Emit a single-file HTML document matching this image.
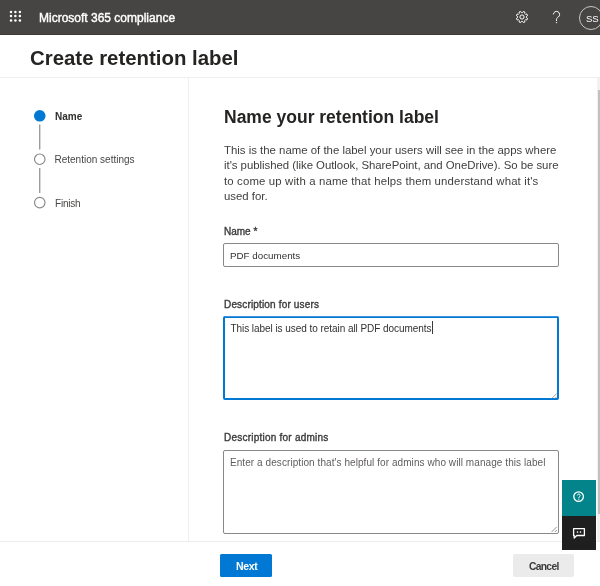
<!DOCTYPE html>
<html><head><meta charset="utf-8">
<style>
*{margin:0;padding:0;box-sizing:border-box}
body{will-change:transform}
html,body{width:600px;height:586px;overflow:hidden;background:#fff;font-family:"Liberation Sans",sans-serif;color:#323130}
.a{position:absolute;white-space:nowrap}
#hdr{position:absolute;left:0;top:0;width:600px;height:35px;background:#464544;border-bottom:1px solid #3d3c3b}
.dot{position:absolute;width:2px;height:2px;background:#fff}
#brand{left:39px;top:11px;font-size:12px;letter-spacing:0px;font-weight:normal;-webkit-text-stroke:0.4px #fff;color:#fff;line-height:14px}
#title{left:30px;top:47px;font-size:20.4px;font-weight:bold;color:#252423;line-height:22px}
#hline{position:absolute;left:0;top:77px;width:600px;height:1px;background:#efefef}
#vline{position:absolute;left:188px;top:78px;width:1px;height:463px;background:#efefef}
#fline{position:absolute;left:0;top:541px;width:600px;height:1px;background:#ececec}
.circ{position:absolute;width:12px;height:12px;border-radius:50%;border:1px solid #8a8886;background:#fff}
.conn{position:absolute;left:39px;width:1px;background:#8a8886}
.step{font-size:10px;line-height:12px;color:#323130}
#h2{left:224px;top:108px;font-size:17.5px;font-weight:bold;color:#252423;line-height:18px}
#para{position:absolute;left:224px;top:143px;width:360px;font-size:11.4px;line-height:15.4px;color:#3f3e3d}
.lbl{font-size:10px;font-weight:normal;-webkit-text-stroke:0.35px #3b3a39;line-height:12px;color:#3b3a39}
.box{position:absolute;left:223px;width:336px;border:1px solid #8a8886;border-radius:2px;background:#fff}
.txt{font-size:10px;line-height:12px}
#btnNext{position:absolute;left:220px;top:554px;width:52px;height:23px;background:#0078d4;border-radius:1.5px}
#btnCancel{position:absolute;left:513px;top:554px;width:61px;height:23px;background:#ebebeb;border-radius:2px}
#sbtrack{position:absolute;left:597px;top:78px;width:3px;height:463px;background:#f1f1f1}
#sbthumb{position:absolute;left:598px;top:90px;width:2px;height:424px;background:#c1c1c1}
#teal{position:absolute;left:562px;top:480px;width:34px;height:36px;background:#02848a}
#dark{position:absolute;left:562px;top:516px;width:34px;height:34px;background:#201f1f}
</style></head><body>
<div id="hdr">
  <svg class="a" style="left:0;top:0" width="30" height="30" viewBox="0 0 30 30" fill="#fff"><circle cx="11" cy="11.9" r="1.25"/><circle cx="15.4" cy="11.9" r="1.25"/><circle cx="19.9" cy="11.9" r="1.25"/><circle cx="11" cy="16.1" r="1.25"/><circle cx="15.4" cy="16.1" r="1.25"/><circle cx="19.9" cy="16.1" r="1.25"/><circle cx="11" cy="20.4" r="1.25"/><circle cx="15.4" cy="20.4" r="1.25"/><circle cx="19.9" cy="20.4" r="1.25"/></svg>
  <div class="a" id="brand">Microsoft 365 compliance</div>
  <svg class="a" style="left:514px;top:9px" width="16" height="16" viewBox="0 0 16 16"><path fill="none" stroke="#fff" stroke-width="1" stroke-linejoin="round" d="M12.50,8.00 L12.46,8.63 L13.54,9.33 L12.86,10.98 L11.60,10.70 L11.18,11.18 L10.70,11.60 L10.98,12.86 L9.33,13.54 L8.63,12.46 L8.00,12.50 L7.37,12.46 L6.67,13.54 L5.02,12.86 L5.30,11.60 L4.82,11.18 L4.40,10.70 L3.14,10.98 L2.46,9.33 L3.54,8.63 L3.50,8.00 L3.54,7.37 L2.46,6.67 L3.14,5.02 L4.40,5.30 L4.82,4.82 L5.30,4.40 L5.02,3.14 L6.67,2.46 L7.37,3.54 L8.00,3.50 L8.63,3.54 L9.33,2.46 L10.98,3.14 L10.70,4.40 L11.18,4.82 L11.60,5.30 L12.86,5.02 L13.54,6.67 L12.46,7.37Z"/><circle cx="8" cy="8" r="2.1" fill="none" stroke="#fff" stroke-width="1"/></svg>
  <svg class="a" style="left:550px;top:9px" width="12" height="16" viewBox="0 0 12 16"><path fill="none" stroke="#fff" stroke-width="1" d="M3.4,5.4 A3.1,3.1 0 1 1 8.3,8 C7.2,8.7 6.5,9.3 6.5,10.6 V12"/><circle cx="6.5" cy="13.6" r="0.7" fill="#fff"/></svg>
  <div class="a" style="left:579px;top:6px;width:24px;height:24px;border:1px solid #c8c6c4;border-radius:50%"></div>
  <div class="a" style="left:586px;top:13px;font-size:9.6px;line-height:12px;color:#fff;letter-spacing:-0.2px">SS</div>
</div>
<div class="a" id="title">Create retention label</div>
<div id="hline"></div>
<div id="vline"></div>
<div id="fline"></div>

<svg class="a" style="left:0;top:100px" width="60" height="120" viewBox="0 100 60 120"><circle cx="39.75" cy="115.8" r="5.8" fill="#0078d4"/><path stroke="#8a8886" stroke-width="1.15" d="M39.75,124.5 V149.6 M39.75,168 V193"/><circle cx="39.75" cy="159.2" r="5.25" fill="none" stroke="#8a8886" stroke-width="1.15"/><circle cx="39.75" cy="202.6" r="5.25" fill="none" stroke="#8a8886" stroke-width="1.15"/></svg>
<div class="a step" style="left:55px;top:111px;font-weight:bold">Name</div>
<div class="a step" style="left:54.5px;top:154px;color:#484644">Retention settings</div>
<div class="a step" style="left:55px;top:198px;color:#484644;letter-spacing:-0.2px">Finish</div>

<div class="a" id="h2">Name your retention label</div>
<div id="para">This is the name of the label your users will see in the apps where<br><span style="letter-spacing:-0.03px">it's published (like Outlook, SharePoint, and OneDrive). So be sure</span><br><span style="letter-spacing:0.14px">to come up with a name that helps them understand what it's</span><br>used for.</div>

<div class="a lbl" style="left:224px;top:226px">Name *</div>
<div class="box" style="top:243px;height:24px"></div>
<div class="a txt" style="left:230px;top:250px;font-size:9.8px">PDF documents</div>

<div class="a lbl" style="left:224px;top:299px;letter-spacing:0.16px">Description for users</div>
<div class="box" style="top:316px;height:84px;border:2px solid #0078d4"></div>
<div class="a" style="left:225px;top:316px;width:332px;height:1px;background:#3f95dc"></div>
<svg class="a" style="left:549px;top:390px" width="10" height="10" viewBox="0 0 10 10"><path stroke="#a19f9d" stroke-width="0.9" d="M2.6,8.6 L7.8,3.4 M5.8,8.6 L7.8,6.6"/></svg>
<div class="a" style="left:432px;top:321px;width:1px;height:13px;background:#3b3a39"></div>
<div class="a txt" style="left:230.4px;top:323px;letter-spacing:-0.05px">This label is used to retain all PDF documents</div>

<div class="a lbl" style="left:224px;top:432px;letter-spacing:0.23px">Description for admins</div>
<div class="box" style="top:450px;height:84px"></div>
<svg class="a" style="left:549px;top:523px" width="10" height="10" viewBox="0 0 10 10"><path stroke="#8a8886" stroke-width="0.9" d="M2.6,9 L7.8,3.8 M5.8,9 L7.8,7"/></svg>
<div class="a txt" style="left:230px;top:457px;color:#605e5c;letter-spacing:0.07px">Enter a description that's helpful for admins who will manage this label</div>

<div id="btnNext"></div>
<div class="a" style="left:236px;top:560px;font-size:10.5px;font-weight:bold;color:#fff;line-height:12px;letter-spacing:-0.3px">Next</div>
<div id="btnCancel"></div>
<div class="a" style="left:529px;top:561px;font-size:10.3px;font-weight:bold;color:#3b3a39;line-height:12px;letter-spacing:-0.7px">Cancel</div>

<div id="sbtrack"></div>
<div id="sbthumb"></div>
<div id="teal"><svg style="position:absolute;left:8px;top:8px" width="18" height="18" viewBox="0 0 18 18"><circle cx="8.6" cy="8.6" r="4.8" fill="none" stroke="#fff" stroke-width="1.3"/><path fill="none" stroke="#fff" stroke-width="1" d="M7.3,7.4 A1.4,1.4 0 1 1 9.6,8.5 C9.1,8.9 8.8,9.2 8.8,9.9 V10.4"/><circle cx="8.8" cy="11.6" r="0.55" fill="#fff"/></svg></div>
<div id="dark"><svg style="position:absolute;left:8px;top:8px" width="18" height="18" viewBox="0 0 18 18"><path fill="none" stroke="#fff" stroke-width="1.3" stroke-linejoin="round" d="M3.6,4.6 H14.4 V11.5 H6.8 L4.2,14 V11.5 H3.6 Z"/><circle cx="7.5" cy="8.1" r="0.8" fill="#fff"/><circle cx="10.5" cy="8.1" r="0.8" fill="#fff"/></svg></div>
</body></html>
